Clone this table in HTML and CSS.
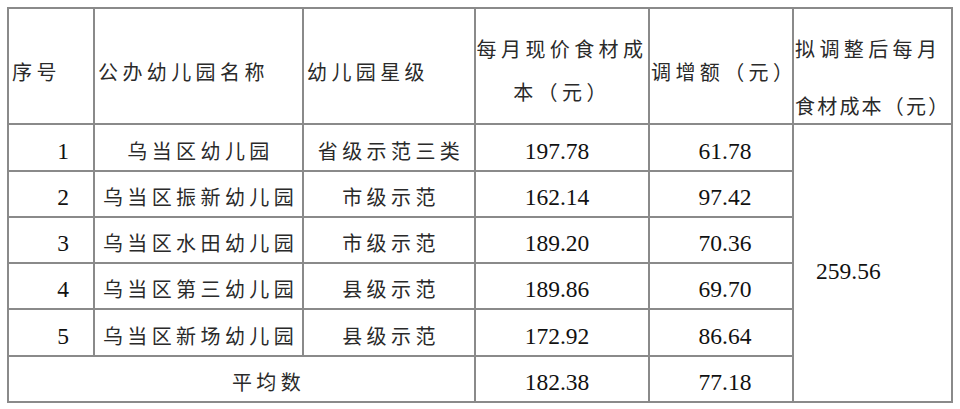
FILE: index.html
```html
<!DOCTYPE html>
<html lang="zh-CN">
<head>
<meta charset="utf-8">
<title>幼儿园食材成本</title>
<link rel="stylesheet" href="styles.css">
</head>
<body>
<table class="cost-table">
  <colgroup>
    <col class="c-no">
    <col class="c-name">
    <col class="c-level">
    <col class="c-cur">
    <col class="c-inc">
    <col class="c-new">
  </colgroup>
  <thead>
    <tr class="head-row">
      <th class="h-left">序号</th>
      <th class="h-left">公办幼儿园名称</th>
      <th class="h-left">幼儿园星级</th>
      <th class="h-two"><span class="line">每月现价食材成</span><span class="line line-2">本（元）</span></th>
      <th class="h-left h-inc">调增额（元）</th>
      <th class="h-last"><span class="line">拟调整后每月</span><span class="line line-3 tight">食材成本（元）</span></th>
    </tr>
  </thead>
  <tbody>
    <tr class="r1">
      <td class="num no">1</td>
      <td class="zh">乌当区幼儿园</td>
      <td class="zh">省级示范三类</td>
      <td class="num cur">197.78</td>
      <td class="num inc">61.78</td>
      <td class="num merged" rowspan="6">259.56</td>
    </tr>
    <tr>
      <td class="num no">2</td>
      <td class="zh">乌当区振新幼儿园</td>
      <td class="zh">市级示范</td>
      <td class="num cur">162.14</td>
      <td class="num inc">97.42</td>
    </tr>
    <tr>
      <td class="num no">3</td>
      <td class="zh">乌当区水田幼儿园</td>
      <td class="zh">市级示范</td>
      <td class="num cur">189.20</td>
      <td class="num inc">70.36</td>
    </tr>
    <tr>
      <td class="num no">4</td>
      <td class="zh">乌当区第三幼儿园</td>
      <td class="zh">县级示范</td>
      <td class="num cur">189.86</td>
      <td class="num inc">69.70</td>
    </tr>
    <tr class="r5">
      <td class="num no">5</td>
      <td class="zh">乌当区新场幼儿园</td>
      <td class="zh">县级示范</td>
      <td class="num cur">172.92</td>
      <td class="num inc">86.64</td>
    </tr>
    <tr>
      <td class="zh avg" colspan="3">平均数</td>
      <td class="num cur">182.38</td>
      <td class="num inc">77.18</td>
    </tr>
  </tbody>
</table>
</body>
</html>
```

FILE: styles.css
```css
html, body {
  margin: 0;
  background: #ffffff;
}

body {
  padding: 7px 0 0 7px;
}

.cost-table {
  border-collapse: collapse;
  table-layout: fixed;
  width: 946px;
  font-family: "Noto Sans CJK SC", "Noto Sans", sans-serif;
  color: #2a2a2a;
}

.c-no { width: 86px; }
.c-name { width: 209px; }
.c-level { width: 172px; }
.c-cur { width: 174px; }
.c-inc { width: 144px; }
.c-new { width: 159px; }

.cost-table th,
.cost-table td {
  border: 2px solid #8a8a8a;
  padding: 0;
  overflow: visible;
  white-space: nowrap;
}

.cost-table th {
  font-weight: 400;
  font-size: 20px;
  letter-spacing: 4.4px;
  line-height: 28px;
}

.head-row {
  height: 116px;
}

.cost-table .h-left {
  text-align: left;
  vertical-align: middle;
  padding: 12px 0 0 3px;
}

.cost-table .h-inc {
  padding-left: 1px;
  border-left-color: #333333;
}

.line {
  display: block;
  line-height: 30px;
}

.cost-table .h-two {
  text-align: center;
  vertical-align: top;
  padding: 25px 0 0 0;
}

.line-2 {
  margin-top: 13px;
}

.cost-table .h-last {
  text-align: left;
  vertical-align: top;
  padding: 25px 0 0 1px;
}

.line-3 {
  margin-top: 27px;
}

.tight {
  letter-spacing: 2.2px;
}

.cost-table tbody tr {
  height: 46px;
}

.cost-table tbody tr.r1,
.cost-table tbody tr.r5 {
  height: 47px;
}

.cost-table td {
  vertical-align: middle;
  text-align: center;
  padding-top: 6px;
  line-height: 30px;
}

.cost-table .zh {
  font-size: 20px;
  letter-spacing: 4.4px;
  padding-left: 4px;
}

.cost-table .num {
  font-family: "Liberation Serif", "Times New Roman", serif;
  font-size: 23.5px;
  color: #111111;
}

.cost-table .no {
  padding-left: 24px;
}

.cost-table .cur {
  padding-right: 10px;
}

.cost-table .inc {
  padding-left: 8px;
  border-left-color: #333333;
}

.cost-table .merged {
  text-align: left;
  padding: 16px 0 0 22px;
}

.cost-table .avg {
  padding-left: 54px;
}
```
